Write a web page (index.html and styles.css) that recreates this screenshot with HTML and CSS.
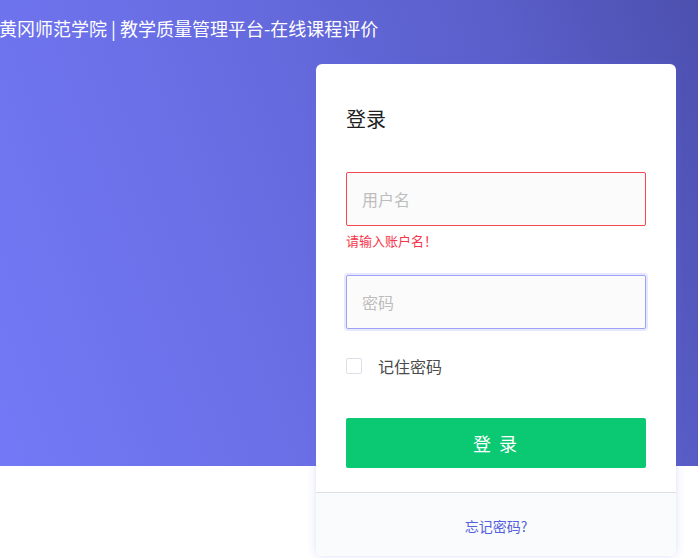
FILE: index.html
```html
<!DOCTYPE html>
<html lang="zh-CN">
<head>
<meta charset="utf-8">
<title>登录</title>
<link rel="stylesheet" href="styles.css">
</head>
<body>
<div class="page">
  <header class="banner">
    <h1 class="site-title">黄冈师范学院 | 教学质量管理平台-在线课程评价</h1>
  </header>
  <main class="card">
    <div class="card-body">
      <h2 class="card-title">登录</h2>
      <div class="field">
        <div class="input input-error">用户名</div>
        <div class="error-msg">请输入账户名！</div>
      </div>
      <div class="field field-pw">
        <div class="input input-focus">密码</div>
      </div>
      <label class="remember"><span class="checkbox"></span><span class="remember-text">记住密码</span></label>
      <button class="btn">登 录</button>
    </div>
    <div class="card-footer">
      <a class="forgot">忘记密码?</a>
    </div>
  </main>
</div>
</body>
</html>
```
FILE: styles.css
```css
html, body {
  margin: 0;
  padding: 0;
  background: #ffffff;
  font-family: "Noto Sans CJK SC", "Liberation Sans", sans-serif;
}
.page {
  width: 698px;
  height: 558px;
  overflow: hidden;
}
.banner {
  height: 466px;
  background: linear-gradient(70deg, #7379f6 0%, #6a6fe6 35%, #5a5fcb 75%, #4d50ae 100%);
  padding-top: 15px;
  box-sizing: border-box;
}
.site-title {
  margin: 0 0 0 -1px;
  font-size: 18px;
  font-weight: normal;
  line-height: 26px;
  color: #ffffff;
  white-space: nowrap;
}
.card {
  position: relative;
  margin: -402px 0 0 316px;
  width: 360px;
  background: #ffffff;
  border-radius: 6px;
  box-shadow: 0 0 8px rgba(110, 110, 235, 0.22);
  overflow: hidden;
}
.card-body {
  padding: 40px 30px 24px;
}
.card-title {
  margin: 0;
  font-size: 20px;
  font-weight: normal;
  line-height: 30px;
  color: #1f1f1f;
}
.field {
  margin-top: 38px;
}
.field-pw {
  margin-top: 25px;
}
.input {
  height: 54px;
  box-sizing: border-box;
  border: 1px solid #dcdfe6;
  border-radius: 2px;
  background: #fbfbfb;
  padding: 0 15px;
  font-size: 16px;
  line-height: 52px;
  color: #bdbdbd;
}
.input-error {
  border-color: #f5484e;
}
.input-focus {
  border-color: #9fa3f6;
  box-shadow: 0 0 0 2px rgba(160, 164, 246, 0.25);
}
.error-msg {
  margin-top: 6px;
  font-size: 13px;
  line-height: 18px;
  color: #f5364b;
}
.remember {
  display: flex;
  align-items: center;
  margin-top: 27px;
  height: 20px;
}
.checkbox {
  width: 16px;
  height: 16px;
  box-sizing: border-box;
  border: 1px solid #dcdfe6;
  border-radius: 2px;
  background: #fff;
}
.remember-text {
  margin-left: 16px;
  font-size: 16px;
  color: #4a4a4a;
}
.btn {
  display: block;
  margin-top: 42px;
  width: 300px;
  height: 50px;
  border: 0;
  border-radius: 2px;
  background: #0bc973;
  color: #ffffff;
  font-family: "Noto Sans CJK SC", "Liberation Sans", sans-serif;
  font-size: 18px;
  letter-spacing: 2px;
}
.card-footer {
  border-top: 1px solid #dcdfe6;
  background: #fafbfc;
  height: 63px;
  display: flex;
  align-items: center;
  justify-content: center;
}
.forgot {
  font-size: 14px;
  color: #5460de;
  margin-top: 2px;
}
```
